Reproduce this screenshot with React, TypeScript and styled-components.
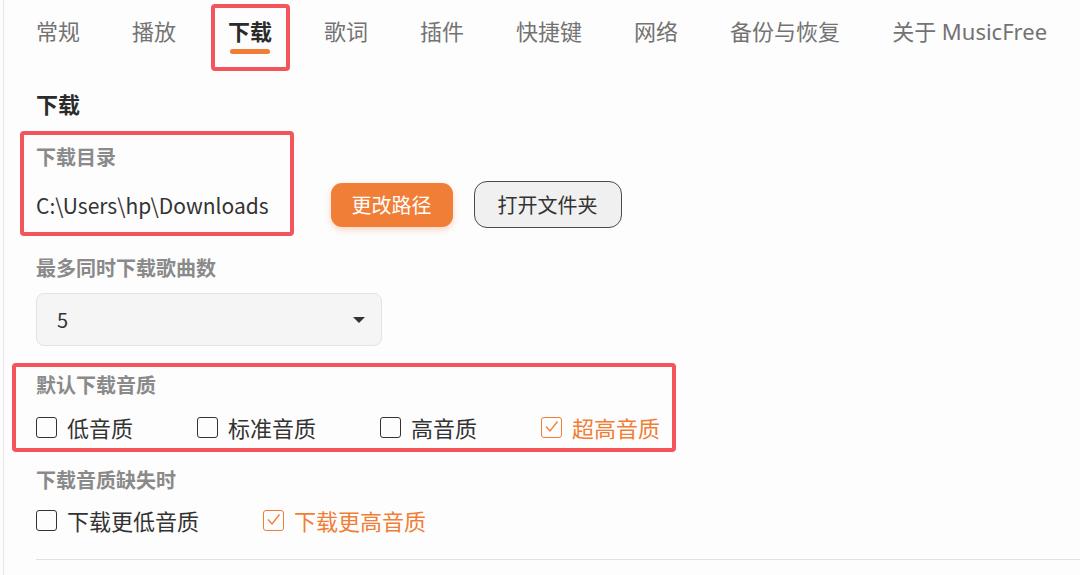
import React from "react";
import styled, { createGlobalStyle } from "styled-components";

const GlobalStyle = createGlobalStyle`
  html, body { margin: 0; padding: 0; background: #fdfdfd; }
  body {
    font-family: "Noto Sans CJK SC", "Noto Sans", sans-serif;
    color: #333;
  }
`;

const ORANGE = "#f07e36";
const RED = "#f4545b";

const Page = styled.div`
  margin-left: 3px;
  border-left: 1px solid #e6e6e6;
  height: 575px;
  box-sizing: border-box;
  padding-left: 32px;
  display: flex;
  flex-direction: column;
  overflow: hidden;
`;

const TabBar = styled.div`
  display: flex;
  align-items: flex-start;
  gap: 52px;
  height: 71px;
  box-sizing: border-box;
  padding-top: 16px;
  white-space: nowrap;
`;

const Tab = styled.div<{ $active?: boolean }>`
  position: relative;
  display: flex;
  flex-direction: column;
  align-items: center;
  font-family: "Noto Sans", "Noto Sans CJK SC", sans-serif;
  font-size: 22px;
  line-height: 30px;
  color: ${(p) => (p.$active ? "#2b2b2b" : "#737373")};
  font-weight: ${(p) => (p.$active ? 700 : 400)};
`;

const TabBarLine = styled.div`
  width: 40px;
  height: 5px;
  margin-top: 3px;
  border-radius: 3px;
  background: ${ORANGE};
`;

const Highlight = styled.div<{ $t: number; $r: number; $b: number; $l: number }>`
  position: absolute;
  top: ${(p) => p.$t}px;
  right: ${(p) => p.$r}px;
  bottom: ${(p) => p.$b}px;
  left: ${(p) => p.$l}px;
  border: 4px solid ${RED};
  border-radius: 4px;
  pointer-events: none;
`;

const Heading = styled.div`
  margin-top: 18px;
  font-size: 22px;
  line-height: 28px;
  font-weight: 700;
  color: #2b2b2b;
`;

const Label = styled.div<{ $mt: number }>`
  margin-top: ${(p) => p.$mt}px;
  font-size: 20px;
  line-height: 26px;
  font-weight: 700;
  color: #8a8a8a;
`;

const DirRow = styled.div`
  display: flex;
  align-items: flex-end;
  margin-top: 27px;
`;

const DirBlock = styled.div`
  position: relative;
  display: flex;
  flex-direction: column;
`;

const PathText = styled.div`
  margin-top: 11px;
  height: 47px;
  display: flex;
  align-items: center;
  font-size: 21px;
  color: #333;
  white-space: nowrap;
`;

const Buttons = styled.div`
  display: flex;
  align-items: center;
  gap: 21px;
  margin-left: 62px;
  height: 47px;
`;

const PrimaryButton = styled.button`
  height: 44px;
  padding: 0 21px;
  border: none;
  border-radius: 11px;
  background: ${ORANGE};
  color: #fff;
  font-family: inherit;
  font-size: 20px;
  box-shadow: 0 3px 6px rgba(240, 126, 54, 0.3);
`;

const SecondaryButton = styled.button`
  height: 47px;
  padding: 0 23px;
  border: 1.5px solid #4a4a4a;
  border-radius: 13px;
  background: #f0f0f0;
  color: #333;
  font-family: inherit;
  font-size: 20px;
`;

const Select = styled.div`
  margin-top: 12px;
  width: 346px;
  height: 53px;
  box-sizing: border-box;
  display: flex;
  align-items: center;
  justify-content: space-between;
  padding: 0 16px 0 20px;
  background: #f5f5f5;
  border: 1px solid #e3e3e3;
  border-radius: 8px;
  font-size: 20px;
  color: #333;
`;

const Caret = styled.span`
  width: 0;
  height: 0;
  border-left: 6px solid transparent;
  border-right: 6px solid transparent;
  border-top: 6px solid #333;
`;

const QualitySection = styled.div`
  position: relative;
  display: flex;
  flex-direction: column;
  align-self: flex-start;
`;

const OptionRow = styled.div<{ $mt: number }>`
  display: flex;
  gap: 64px;
  margin-top: ${(p) => p.$mt}px;
  height: 30px;
  align-items: center;
`;

const Option = styled.label<{ $checked?: boolean }>`
  display: flex;
  align-items: center;
  gap: 10px;
  font-size: 22px;
  color: ${(p) => (p.$checked ? ORANGE : "#333")};
  white-space: nowrap;
`;

const Box = styled.span<{ $checked?: boolean }>`
  width: 21px;
  height: 21px;
  box-sizing: border-box;
  border: 1.5px solid ${(p) => (p.$checked ? ORANGE : "#333")};
  border-radius: 3px;
  display: flex;
  align-items: center;
  justify-content: center;
`;

const Divider = styled.div`
  margin-top: 24px;
  height: 1px;
  background: #e2e2e2;
`;

const Check = ({ checked, text }: { checked?: boolean; text: string }) => (
  <Option $checked={checked}>
    <Box $checked={checked}>
      {checked && (
        <svg width="18" height="18" viewBox="0 0 18 18">
          <polyline points="3,8.5 7,13 14.5,3.5" fill="none" stroke={ORANGE} strokeWidth="1.3" />
        </svg>
      )}
    </Box>
    {text}
  </Option>
);

const tabs = ["常规", "播放", "下载", "歌词", "插件", "快捷键", "网络", "备份与恢复", "关于 MusicFree"];

export default function App() {
  return (
    <>
      <GlobalStyle />
      <Page>
        <TabBar>
          {tabs.map((t) => (
            <Tab key={t} $active={t === "下载"}>
              {t}
              {t === "下载" && <TabBarLine />}
              {t === "下载" && <Highlight $t={-12} $r={-18} $b={-17} $l={-17} />}
            </Tab>
          ))}
        </TabBar>
        <Heading>下载</Heading>
        <DirRow>
          <DirBlock>
            <Label $mt={0}>下载目录</Label>
            <PathText>C:\Users\hp\Downloads</PathText>
            <Highlight $t={-13} $r={-25} $b={-8} $l={-16} />
          </DirBlock>
          <Buttons>
            <PrimaryButton>更改路径</PrimaryButton>
            <SecondaryButton>打开文件夹</SecondaryButton>
          </Buttons>
        </DirRow>
        <Label $mt={27}>最多同时下载歌曲数</Label>
        <Select>
          <span>5</span>
          <Caret />
        </Select>
        <QualitySection>
          <Label $mt={26}>默认下载音质</Label>
          <OptionRow $mt={14}>
            <Check text="低音质" />
            <Check text="标准音质" />
            <Check text="高音质" />
            <Check text="超高音质" checked />
          </OptionRow>
          <Highlight $t={17} $r={-16} $b={-10} $l={-24} />
        </QualitySection>
        <Label $mt={25}>下载音质缺失时</Label>
        <OptionRow $mt={12}>
          <Check text="下载更低音质" />
          <Check text="下载更高音质" checked />
        </OptionRow>
        <Divider />
      </Page>
    </>
  );
}
